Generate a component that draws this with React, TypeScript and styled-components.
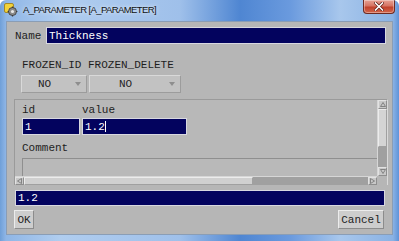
import React from "react";
import styled, { createGlobalStyle } from "styled-components";

const Global = createGlobalStyle`
  html, body { margin: 0; padding: 0; background: #ffffff; }
  * { box-sizing: border-box; }
`;

const MONO = `"Liberation Mono", "DejaVu Sans Mono", monospace`;

const Window = styled.div`
  width: 399px;
  height: 241px;
  display: flex;
  flex-direction: column;
  background: linear-gradient(90deg, #6f9fd8 0px, #8fb6e6 6px, #b0cdef 60px, #9fc0ea 180px, #4f86d2 240px, #6a9ade 290px, #a8c7ec 340px, #8ab2e4 393px, #5f93d8 399px);
  border-top-left-radius: 6px;
  border-top-right-radius: 6px;
  overflow: hidden;
`;

const TitleBar = styled.div`
  height: 21px;
  display: flex;
  align-items: flex-start;
  padding-left: 4px;
`;

const TitleIcon = styled.svg`
  width: 14px;
  height: 14px;
  margin-top: 3px;
  flex: none;
`;

const TitleText = styled.span`
  margin-left: 5px;
  margin-top: 4px;
  font-family: "Liberation Sans", Arial, sans-serif;
  font-size: 9.5px;
  line-height: 12px;
  color: #111;
  letter-spacing: -0.6px;
  text-shadow: 0 0 4px rgba(255, 255, 255, 0.9);
`;

const CloseButton = styled.div`
  margin-left: auto;
  margin-right: 4px;
  width: 32px;
  height: 14px;
  border: 1px solid #6e2a22;
  border-top: none;
  border-radius: 0 0 4px 4px;
  background: linear-gradient(180deg, #e6a295 0%, #d67463 45%, #c1422c 55%, #d2664c 100%);
  display: flex;
  align-items: center;
  justify-content: center;
  box-shadow: inset 0 0 0 1px rgba(255, 255, 255, 0.35);
`;

const Client = styled.div`
  flex: 1;
  margin: 0 6px 6px 6px;
  background: #b6b6b6;
  border: 1px solid #8a9db5;
  display: flex;
  flex-direction: column;
  font-family: ${MONO};
  font-size: 11px;
  color: #1e1e1e;
`;

const NameRow = styled.div`
  display: flex;
  align-items: center;
  margin-top: 5px;
  padding-left: 8px;
  height: 17px;
`;

const Label = styled.span<{ $w?: number }>`
  font-family: ${MONO};
  font-size: 11px;
  line-height: 12px;
  color: #1e1e1e;
  white-space: pre;
  ${(p) => (p.$w ? `width: ${p.$w}px; flex: none;` : "")}
`;

const NavyField = styled.div<{ $w?: number; $h?: number }>`
  height: ${(p) => p.$h ?? 16}px;
  ${(p) => (p.$w ? `width: ${p.$w}px; flex: none;` : "flex: 1;")}
  background: #03035e;
  border: 1px solid #d8d8e0;
  color: #ffffff;
  font-family: ${MONO};
  font-size: 11px;
  line-height: 14px;
  padding-left: 2px;
  white-space: pre;
  display: flex;
  align-items: center;
`;

const Caret = styled.span`
  display: inline-block;
  width: 1px;
  height: 11px;
  background: #ffffff;
`;

const FrozenLabels = styled.div`
  margin-top: 15px;
  padding-left: 15px;
  height: 12px;
  display: flex;
`;

const DropRow = styled.div`
  display: flex;
  gap: 2px;
  margin-top: 4px;
  padding-left: 14px;
`;

const Dropdown = styled.div<{ $w: number }>`
  width: ${(p) => p.$w}px;
  height: 18px;
  background: #c2c2c2;
  border: 1px solid #d9d9d9;
  border-right-color: #9c9c9c;
  border-bottom-color: #9c9c9c;
  display: flex;
  align-items: center;
  font-family: ${MONO};
  font-size: 11px;
  color: #1e1e1e;
`;

const DropText = styled.span`
  flex: 1;
  text-align: center;
  padding-right: 8px;
`;

const DropArrow = styled.span`
  width: 0;
  height: 0;
  border-left: 3px solid transparent;
  border-right: 3px solid transparent;
  border-top: 4px solid #8e8e8e;
  margin-right: 5px;
`;

const Panel = styled.div`
  margin-top: 6px;
  margin-left: 7px;
  width: 374px;
  height: 86px;
  border-top: 1px solid #9a9a9a;
  border-left: 1px solid #9a9a9a;
  border-right: 1px solid #dadada;
  display: grid;
  grid-template-columns: 1fr 10px;
  grid-template-rows: 1fr 9px;
  background: #b8b8b8;
`;

const PanelContent = styled.div`
  padding-left: 7px;
  display: flex;
  flex-direction: column;
  overflow: hidden;
`;

const ColLabels = styled.div`
  display: flex;
  margin-top: 4px;
  height: 12px;
`;

const InputRow = styled.div`
  display: flex;
  gap: 2px;
  margin-top: 2px;
`;

const CommentLabel = styled.div`
  margin-top: 7px;
  height: 12px;
  font-family: ${MONO};
  font-size: 11px;
  line-height: 12px;
`;

const CommentBox = styled.div`
  margin-top: 4px;
  flex: 1;
  border-top: 1px solid #8f8f8f;
  border-left: 1px solid #8f8f8f;
  background: #b9b9b9;
`;

const VScroll = styled.div`
  display: flex;
  flex-direction: column;
  border-left: 1px solid #d6d6d6;
  background: #9f9f9f;
`;

const ScrollArrowBox = styled.div`
  height: 9px;
  flex: none;
  background: #c8c8c8;
  border: 1px solid #e2e2e2;
  border-right-color: #8e8e8e;
  border-bottom-color: #8e8e8e;
  display: flex;
  align-items: center;
  justify-content: center;
`;

const HArrowBox = styled(ScrollArrowBox)`
  width: 9px;
  height: auto;
`;

const VThumb = styled.div`
  height: 38px;
  flex: none;
  background: #d4d4d4;
  border: 1px solid #ececec;
  border-right-color: #a0a0a0;
  border-bottom-color: #a0a0a0;
`;

const Track = styled.div`
  flex: 1;
  background: #a0a0a0;
`;

const HScroll = styled.div`
  display: flex;
  border-top: 1px solid #d6d6d6;
  background: #a0a0a0;
`;

const HThumb = styled.div`
  width: 229px;
  flex: none;
  background: #d0d0d0;
  border: 1px solid #ececec;
  border-right-color: #a0a0a0;
  border-bottom-color: #a0a0a0;
`;

const Corner = styled.div`
  background: #b6b6b6;
`;

const BottomField = styled(NavyField)`
  margin: 5px 7px 0 8px;
  flex: none;
  height: 16px;
`;

const ButtonRow = styled.div`
  display: flex;
  justify-content: space-between;
  margin-top: 4px;
  padding: 0 8px 0 7px;
`;

const Button = styled.div<{ $w: number }>`
  width: ${(p) => p.$w}px;
  height: 19px;
  background: #cdcdcd;
  border: 1px solid #ececec;
  border-right-color: #8c8c8c;
  border-bottom-color: #8c8c8c;
  font-family: ${MONO};
  font-size: 11px;
  color: #1e1e1e;
  display: flex;
  align-items: center;
  justify-content: center;
`;

const UpTri = () => (
  <svg width="6" height="5" viewBox="0 0 6 5">
    <path d="M3 0.5 L5.5 4.5 L0.5 4.5 Z" fill="none" stroke="#7a7a7a" strokeWidth="0.9" />
  </svg>
);
const DownTri = () => (
  <svg width="6" height="5" viewBox="0 0 6 5">
    <path d="M0.5 0.5 L5.5 0.5 L3 4.5 Z" fill="none" stroke="#7a7a7a" strokeWidth="0.9" />
  </svg>
);
const LeftTri = () => (
  <svg width="5" height="6" viewBox="0 0 5 6">
    <path d="M0.5 3 L4.5 0.5 L4.5 5.5 Z" fill="none" stroke="#7a7a7a" strokeWidth="0.9" />
  </svg>
);
const RightTri = () => (
  <svg width="5" height="6" viewBox="0 0 5 6">
    <path d="M4.5 3 L0.5 0.5 L0.5 5.5 Z" fill="none" stroke="#7a7a7a" strokeWidth="0.9" />
  </svg>
);

export default function App() {
  return (
    <>
      <Global />
      <Window>
        <TitleBar>
          <TitleIcon viewBox="0 0 14 14">
            <rect x="0.5" y="0.5" width="9" height="9" rx="1.5" fill="#f2d23a" stroke="#9a7a10" strokeWidth="0.8" />
            <circle cx="8.5" cy="8.5" r="4" fill="#8a8a8a" stroke="#3a3a3a" strokeWidth="0.8" />
            <circle cx="8.5" cy="8.5" r="1.6" fill="#e8e8e8" />
            <path d="M8.5 3.6 V5 M8.5 12 V13.4 M3.6 8.5 H5 M12 8.5 H13.4" stroke="#3a3a3a" strokeWidth="1.2" />
          </TitleIcon>
          <TitleText>A_PARAMETER [A_PARAMETER]</TitleText>
          <CloseButton>
            <svg width="10" height="9" viewBox="0 0 10 9">
              <path d="M1.5 1 L8.5 8 M8.5 1 L1.5 8" stroke="#5a1a12" strokeWidth="3" strokeLinecap="square" />
              <path d="M1.5 1 L8.5 8 M8.5 1 L1.5 8" stroke="#ffffff" strokeWidth="1.6" strokeLinecap="square" />
            </svg>
          </CloseButton>
        </TitleBar>
        <Client>
          <NameRow>
            <Label $w={31}>Name</Label>
            <NavyField $w={340} $h={17}>Thickness</NavyField>
          </NameRow>
          <FrozenLabels>
            <Label>FROZEN_ID FROZEN_DELETE</Label>
          </FrozenLabels>
          <DropRow>
            <Dropdown $w={66}>
              <DropText>NO</DropText>
              <DropArrow />
            </Dropdown>
            <Dropdown $w={92}>
              <DropText>NO</DropText>
              <DropArrow />
            </Dropdown>
          </DropRow>
          <Panel>
            <PanelContent>
              <ColLabels>
                <Label $w={60}>id</Label>
                <Label>value</Label>
              </ColLabels>
              <InputRow>
                <NavyField $w={58} $h={17}>1</NavyField>
                <NavyField $w={105} $h={17}>
                  1.2<Caret />
                </NavyField>
              </InputRow>
              <CommentLabel>Comment</CommentLabel>
              <CommentBox />
            </PanelContent>
            <VScroll>
              <ScrollArrowBox>
                <UpTri />
              </ScrollArrowBox>
              <VThumb />
              <Track />
              <ScrollArrowBox>
                <DownTri />
              </ScrollArrowBox>
            </VScroll>
            <HScroll>
              <HArrowBox>
                <LeftTri />
              </HArrowBox>
              <HThumb />
              <Track />
              <HArrowBox>
                <RightTri />
              </HArrowBox>
            </HScroll>
            <Corner />
          </Panel>
          <BottomField>1.2</BottomField>
          <ButtonRow>
            <Button $w={20}>OK</Button>
            <Button $w={46}>Cancel</Button>
          </ButtonRow>
        </Client>
      </Window>
    </>
  );
}
